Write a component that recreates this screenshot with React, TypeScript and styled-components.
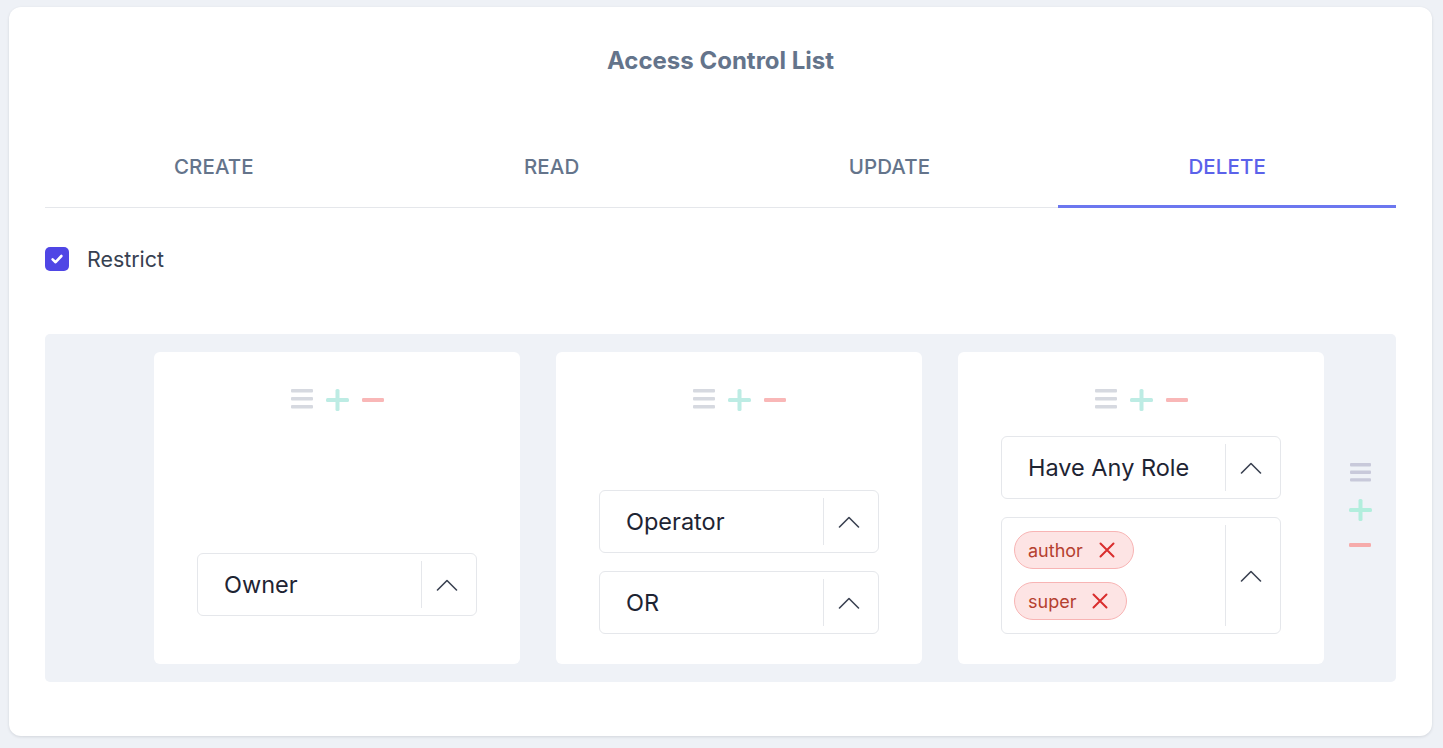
import React from "react";
import styled, { createGlobalStyle } from "styled-components";

const Global = createGlobalStyle`
  html, body { margin: 0; padding: 0; background: #eef1f6; }
  body { font-family: Inter, "Noto Sans", "Liberation Sans", sans-serif; }
  * { box-sizing: border-box; }
`;

const Page = styled.div`
  padding: 7px 11px 12px 9px;
`;

const Card = styled.div`
  background: #ffffff;
  border-radius: 12px;
  box-shadow: 0 1px 3px rgba(15, 23, 42, 0.12);
  padding: 36px 36px 54px;
`;

const Title = styled.h1`
  margin: 0;
  text-align: center;
  font-size: 24px;
  line-height: 36px;
  font-weight: 700;
  color: #64748b;
`;

const Tabs = styled.div`
  display: flex;
  margin-top: 46px;
  border-bottom: 1px solid #e5e7eb;
`;

const Tab = styled.div<{ $active?: boolean }>`
  flex: 1;
  position: relative;
  text-align: center;
  padding: 30px 0 28px;
  font-size: 20.5px;
  line-height: 24px;
  font-weight: 500;
  letter-spacing: 0.1px;
  color: ${(p) => (p.$active ? "#5b62ea" : "#64748b")};
  &::after {
    content: "";
    display: ${(p) => (p.$active ? "block" : "none")};
    position: absolute;
    left: 0;
    right: 0;
    bottom: -1px;
    height: 3px;
    background: #6c77ef;
  }
`;

const CheckRow = styled.label`
  display: flex;
  align-items: center;
  gap: 18px;
  margin-top: 38px;
  font-size: 21.4px;
  line-height: 26px;
  color: #374151;
`;

const CheckBox = styled.span`
  width: 24px;
  height: 24px;
  border-radius: 5px;
  background: #4f46e5;
  display: flex;
  align-items: center;
  justify-content: center;
`;

const Panel = styled.div`
  margin-top: 62px;
  background: #eff2f7;
  border-radius: 5px;
  padding: 18px 24px 18px 109px;
  display: flex;
  align-items: stretch;
  gap: 36px;
`;

const RuleCard = styled.div<{ $bottom?: number }>`
  width: 366px;
  flex: 0 0 366px;
  background: #ffffff;
  border-radius: 6px;
  padding: 30px 0 ${(p) => p.$bottom ?? 30}px;
  display: flex;
  flex-direction: column;
  align-items: center;
  justify-content: space-between;
  gap: 18px;
`;

const Tools = styled.div`
  height: 36px;
  display: flex;
  align-items: center;
  gap: 13px;
`;

const Stack = styled.div`
  display: flex;
  flex-direction: column;
  gap: 18px;
`;

const SelectBox = styled.div<{ $tall?: boolean }>`
  width: 280px;
  height: ${(p) => (p.$tall ? 117 : 63)}px;
  border: 1px solid #e5e7eb;
  border-radius: 6px;
  background: #fff;
  display: flex;
  align-items: stretch;
`;

const SelectValue = styled.div`
  flex: 1;
  display: flex;
  align-items: center;
  padding-left: 26px;
  font-size: 23.5px;
  color: #1e2433;
`;

const TagList = styled.div`
  flex: 1;
  display: flex;
  flex-direction: column;
  align-items: flex-start;
  justify-content: center;
  gap: 13px;
  padding-left: 12px;
`;

const Tag = styled.div`
  height: 38px;
  border-radius: 19px;
  background: #fde4e4;
  border: 1px solid #f8b4b4;
  display: flex;
  align-items: center;
  gap: 16px;
  padding: 0 18px 0 13px;
  font-size: 18px;
  color: #b5402f;
`;

const Indicator = styled.div`
  width: 55px;
  display: flex;
  align-items: center;
  justify-content: center;
  padding-right: 3px;
  position: relative;
  &::before {
    content: "";
    position: absolute;
    left: 0;
    top: 7px;
    bottom: 7px;
    width: 1px;
    background: #e5e7eb;
  }
`;

const SideTools = styled.div`
  align-self: center;
  display: flex;
  flex-direction: column;
  align-items: center;
  margin-top: -6px;
  margin-left: -12px;
  flex: 0 0 24px;
`;

const SideGap = styled.div<{ $h: number }>`
  height: ${(p) => p.$h}px;
`;

const Chevron = () => (
  <svg width="22" height="12" viewBox="0 0 22 12" fill="none">
    <polyline points="1.5,11 11,1.5 20.5,11" stroke="#3b4252" strokeWidth="1.6" strokeLinecap="round" strokeLinejoin="round" />
  </svg>
);

const XIcon = () => (
  <svg width="16" height="16" viewBox="0 0 16 16" fill="none">
    <path d="M1.5 1.5 L14.5 14.5 M14.5 1.5 L1.5 14.5" stroke="#d92d2d" strokeWidth="2" strokeLinecap="round" />
  </svg>
);

const Check = () => (
  <svg width="18" height="18" viewBox="0 0 18 18" fill="none">
    <polyline points="4.6,9.4 7.6,12.2 13.4,6" stroke="#fff" strokeWidth="2.6" strokeLinecap="round" strokeLinejoin="round" />
  </svg>
);

const Menu = ({ w, color, gap }: { w: number; color: string; gap: number }) => (
  <svg width={w} height={6 + gap * 2} viewBox={`0 0 ${w} ${6 + gap * 2}`}>
    <rect x="0" y="0" width={w} height="3.4" rx="1" fill={color} />
    <rect x="0" y={gap} width={w} height="3.4" rx="1" fill={color} />
    <rect x="0" y={gap * 2} width={w} height="3.4" rx="1" fill={color} />
  </svg>
);

const Plus = ({ color }: { color: string }) => (
  <svg width="23" height="22" viewBox="0 0 23 22">
    <rect x="0" y="9" width="23" height="4" rx="1.5" fill={color} />
    <rect x="9.5" y="0" width="4" height="22" rx="1.5" fill={color} />
  </svg>
);

const Minus = ({ color }: { color: string }) => (
  <svg width="22" height="4" viewBox="0 0 22 4">
    <rect x="0" y="0" width="22" height="4" rx="1.2" fill={color} />
  </svg>
);

const ToolIcons = () => (
  <Tools>
    <Menu w={22} color="#d6d9e0" gap={8} />
    <Plus color="#bdece4" />
    <Minus color="#f9b7b7" />
  </Tools>
);

const Select = ({ value }: { value: string }) => (
  <SelectBox>
    <SelectValue>{value}</SelectValue>
    <Indicator>
      <Chevron />
    </Indicator>
  </SelectBox>
);

export default function App() {
  return (
    <>
      <Global />
      <Page>
        <Card>
          <Title>Access Control List</Title>
          <Tabs>
            <Tab>CREATE</Tab>
            <Tab>READ</Tab>
            <Tab>UPDATE</Tab>
            <Tab $active>DELETE</Tab>
          </Tabs>
          <CheckRow>
            <CheckBox>
              <Check />
            </CheckBox>
            Restrict
          </CheckRow>
          <Panel>
            <RuleCard $bottom={48}>
              <ToolIcons />
              <Select value="Owner" />
            </RuleCard>
            <RuleCard>
              <ToolIcons />
              <Stack>
                <Select value="Operator" />
                <Select value="OR" />
              </Stack>
            </RuleCard>
            <RuleCard>
              <ToolIcons />
              <Stack>
                <Select value="Have Any Role" />
                <SelectBox $tall>
                  <TagList>
                    <Tag>
                      author
                      <XIcon />
                    </Tag>
                    <Tag>
                      super
                      <XIcon />
                    </Tag>
                  </TagList>
                  <Indicator>
                    <Chevron />
                  </Indicator>
                </SelectBox>
              </Stack>
            </RuleCard>
            <SideTools>
              <Menu w={21} color="#c8c9da" gap={7.6} />
              <SideGap $h={15} />
              <Plus color="#b2eedd" />
              <SideGap $h={22} />
              <Minus color="#f6abab" />
            </SideTools>
          </Panel>
        </Card>
      </Page>
    </>
  );
}
